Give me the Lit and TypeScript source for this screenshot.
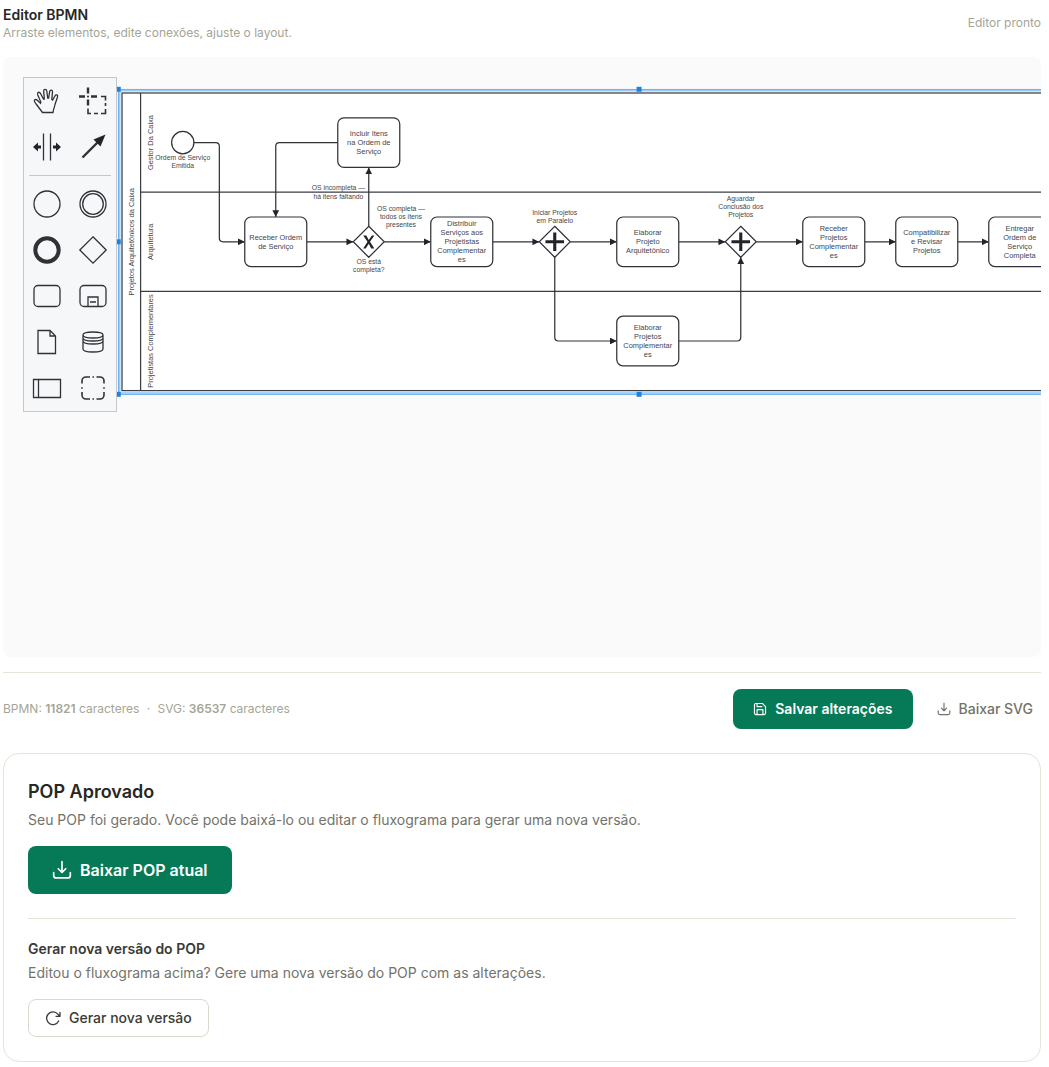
import { LitElement, html, svg, css } from "lit";
import { customElement, state } from "lit/decorators.js";

type Point = [number, number];
interface Task { cx: number; cy: number; lines: string[]; }
interface Label { cx: number; cy: number; lines: string[]; }

const TASKS: Task[] = [
  { cx: 398, cy: 80, lines: ["Incluir Itens", "na Ordem de", "Serviço"] },
  { cx: 248, cy: 240, lines: ["Receber Ordem", "de Serviço"] },
  { cx: 548, cy: 240, lines: ["Distribuir", "Serviços aos", "Projetistas", "Complementar", "es"] },
  { cx: 848, cy: 240, lines: ["Elaborar", "Projeto", "Arquitetônico"] },
  { cx: 848, cy: 400, lines: ["Elaborar", "Projetos", "Complementar", "es"] },
  { cx: 1148, cy: 240, lines: ["Receber", "Projetos", "Complementar", "es"] },
  { cx: 1298, cy: 240, lines: ["Compatibilizar", "e Revisar", "Projetos"] },
  { cx: 1448, cy: 240, lines: ["Entregar", "Ordem de", "Serviço", "Completa"] },
];

/* cy is the middle of the first line */
const LABELS: Label[] = [
  { cx: 98, cy: 104, lines: ["Ordem de Serviço", "Emitida"] },
  { cx: 349, cy: 153, lines: ["OS incompleta —", "há itens faltando"] },
  { cx: 450, cy: 186, lines: ["OS completa —", "todos os itens", "presentes"] },
  { cx: 398, cy: 271, lines: ["OS está", "completa?"] },
  { cx: 698, cy: 192, lines: ["Iniciar Projetos", "em Paralelo"] },
  { cx: 998, cy: 170, lines: ["Aguardar", "Conclusão dos", "Projetos"] },
];

const FLOWS: Point[][] = [
  [[116, 80], [157, 80], [157, 240], [198, 240]],
  [[298, 240], [373, 240]],
  [[398, 215], [398, 120]],
  [[348, 80], [248, 80], [248, 200]],
  [[423, 240], [498, 240]],
  [[598, 240], [673, 240]],
  [[723, 240], [798, 240]],
  [[698, 265], [698, 400], [798, 400]],
  [[898, 240], [973, 240]],
  [[898, 400], [998, 400], [998, 265]],
  [[1023, 240], [1098, 240]],
  [[1198, 240], [1248, 240]],
  [[1348, 240], [1398, 240]],
];

const LANES = ["Gestor Da Caixa", "Arquitetura", "Projetistas Complementares"];
const POOL = { width: 1668, height: 480, lane: 160 };

/* Polyline with softened corners */
function flowPath(points: Point[], radius = 6): string {
  const toward = ([ax, ay]: Point, [bx, by]: Point): Point => [
    ax + Math.sign(bx - ax) * radius,
    ay + Math.sign(by - ay) * radius,
  ];
  let d = `M${points[0]}`;
  for (let i = 1; i < points.length - 1; i++) {
    d += `L${toward(points[i], points[i - 1])}Q${points[i]} ${toward(points[i], points[i + 1])}`;
  }
  return `${d}L${points[points.length - 1]}`;
}

const textLines = (cx: number, first: number, step: number, lines: string[], cls: string) =>
  svg`<text class=${cls} text-anchor="middle">${lines.map(
    (line, i) => svg`<tspan x=${cx} y=${first + i * step + 4}>${line}</tspan>`
  )}</text>`;

@customElement("bpmn-diagram")
class BpmnDiagram extends LitElement {
  static styles = css`
    :host { display: block; overflow: hidden; }
    .canvas { display: block; width: 100%; height: 100%; }
    .pool, .lane { stroke: #3c3e44; stroke-width: 2; }
    .pool { fill: #fff; }
    .lane { fill: none; }
    .shape { fill: #fff; stroke: #303238; stroke-width: 2; }
    .flow { fill: none; stroke: #303238; stroke-width: 2; }
    .head { fill: #22242a; }
    .plus { fill: none; stroke: #22242a; stroke-width: 5; }
    .text { font: 12px "Liberation Sans", Arial, sans-serif; fill: #44464b; }
    .small { font: 11px "Liberation Sans", Arial, sans-serif; fill: #44464b; }
    .halo { fill: none; stroke: #9bcdfa; stroke-width: 3; }
    .outline { fill: none; stroke: #2c8fe8; stroke-width: 1; }
    .handle { fill: #1a83e0; }
  `;

  private gateway(cx: number, kind: "x" | "plus") {
    return svg`
      <path class="shape" d="M${cx} 215l25 25l-25 25l-25-25z"/>
      ${kind === "plus"
        ? svg`<path class="plus" d="M${cx - 15} 240h30M${cx} 225v30"/>`
        : svg`<path class="head" d="M${cx - 9} 230h5l4 7l5-7h4l-7 10l7 11h-5l-4-8l-5 8h-4l7-11z"/>`}`;
  }

  render() {
    const w = POOL.width, h = POOL.height;
    const handles: Point[] = [[-6, -6], [w / 2, -6], [-6, h / 2], [-6, h + 6], [w / 2, h + 6]];
    return html`
      <svg class="canvas" role="img" aria-label="Fluxograma do processo">
        <defs>
          <marker id="arrow" viewBox="0 0 10 10" refX="10" refY="5" markerWidth="11"
            markerHeight="11" markerUnits="userSpaceOnUse" orient="auto">
            <path class="head" d="M0 0L10 5L0 10z"/>
          </marker>
        </defs>
        <g transform="translate(119 36) scale(0.62)">
          <rect class="pool" width=${w} height=${h}/>
          <path class="lane" d="M30 0V${h}M30 160H${w}M30 320H${w}"/>
          <text class="text" text-anchor="middle" transform="translate(20 240) rotate(-90)">Projetos Arquitetônicos da Caixa</text>
          ${LANES.map((name, i) => svg`
            <text class="text" text-anchor="middle"
              transform="translate(50 ${i * POOL.lane + 80}) rotate(-90)">${name}</text>`)}
          ${FLOWS.map((p) => svg`<path class="flow" marker-end="url(#arrow)" d=${flowPath(p)}/>`)}
          <circle class="shape" cx="98" cy="80" r="18"/>
          ${this.gateway(398, "x")}${this.gateway(698, "plus")}${this.gateway(998, "plus")}
          ${TASKS.map((t) => svg`
            <rect class="shape" x=${t.cx - 50} y=${t.cy - 40} width="100" height="80" rx="10"/>
            ${textLines(t.cx, t.cy - (t.lines.length - 1) * 7.2, 14.4, t.lines, "text")}`)}
          ${LABELS.map((l) => textLines(l.cx, l.cy, 13.2, l.lines, "small"))}
          <rect class="halo" x="-4" y="-4" width=${w + 8} height=${h + 8}/>
          <rect class="outline" x="-6" y="-6" width=${w + 12} height=${h + 12}/>
          ${handles.map(([x, y]) => svg`<rect class="handle" x=${x - 4} y=${y - 4} width="8" height="8"/>`)}
        </g>
      </svg>`;
  }
}

const TOOLS_TOP = [
  { label: "Ativar ferramenta mão", icon: svg`<path d="M18.500 34.500L12.500 26.500L10.600 23.800C9.600 21.600 11.600 20.800 13.300 22.300L16.500 25.200L16.800 24L13.700 16.700C13 14.300 15.300 13.300 16.500 15.500L19.600 21.200L20.300 21L19.700 13C19.700 10.700 22.500 10.700 22.800 13L23.700 20.200L24.600 20.200L25.700 13.500C26.200 11.400 28.700 11.700 28.500 14L27.800 21.500L28.600 22L30.900 18C32 16 34.200 16.900 33.500 19L31 26.500C30.500 29.500 29.300 31 29 34.500z"/>` },
  { label: "Ativar ferramenta laço", icon: svg`<path class="bold" d="M9 18.500h6M21 18.500h6M18 9.500v6M18 21.500v6"/><path class="mid" d="M31 18.500h4.500v4M35.500 25v3M35.500 31v4.500h-4.500M28 35.500h-4M21 35.500h-3v-5"/><circle class="solid" cx="18" cy="18.500" r="1"/>` },
  { label: "Ativar ferramenta de espaço", icon: svg`<path d="M19.500 9.500v27M26.500 9.500v27"/><path class="solid" d="M9 23l5-4.500v3h3v3h-3v3zM37 23l-5-4.500v3h-3v3h3v3z"/>` },
  { label: "Ativar conexão global", icon: svg`<path class="bold" d="M12.500 33.500L28 18"/><path class="solid" d="M35.500 10.500L23.500 15.500L30.500 22.500z"/>` },
];
const TOOLS_BOTTOM = [
  { label: "Criar evento de início", icon: svg`<circle cx="23" cy="23" r="13"/>` },
  { label: "Criar evento intermediário", icon: svg`<circle cx="23" cy="23" r="13"/><circle cx="23" cy="23" r="10.300"/>` },
  { label: "Criar evento de fim", icon: svg`<circle class="heavy" cx="23" cy="23" r="11.700"/>` },
  { label: "Criar gateway", icon: svg`<path d="M23 9.800L36.200 23L23 36.200L9.800 23z"/>` },
  { label: "Criar tarefa", icon: svg`<rect x="10" y="12.500" width="26" height="21" rx="4"/>` },
  { label: "Criar subprocesso", icon: svg`<rect x="10" y="12.500" width="26" height="21" rx="4"/><path d="M18 33.500v-9.500h10v9.500M20 29h6"/>` },
  { label: "Criar objeto de dados", icon: svg`<path d="M14 11.500h12l5.500 5.500v17.500H14zM26 11.500V17h5.500"/>` },
  { label: "Criar repositório de dados", icon: svg`<path d="M13 16v14c0 4 20 4 20 0V16M13 16c0-4 20-4 20 0M13 16c0 4 20 4 20 0M13 19c0 4 20 4 20 0M13 22c0 4 20 4 20 0"/>` },
  { label: "Criar piscina", icon: svg`<path d="M9.500 14.500h27v18h-27zM14.500 14.500v18"/>` },
  { label: "Criar grupo", icon: svg`<path class="mid" d="M12 18.500V16a4 4 0 0 1 4-4h4M22.500 12h1.500M26.500 12H30a4 4 0 0 1 4 4v2.500M34 22.300v1.500M34 27v3a4 4 0 0 1-4 4h-3.500M24 34h-1.500M20 34h-4a4 4 0 0 1-4-4v-3M12 23.800v-1.500"/>` },
];

@customElement("bpmn-palette")
class BpmnPalette extends LitElement {
  static styles = css`
    :host { display: block; }
    .palette { background: #f5f7f9; border: 1px solid #c3c7ce; }
    .group { display: grid; grid-template-columns: 46px 46px; }
    .line { border: 0; border-top: 1px solid #c3c7ce; margin: 5px; }
    .tool { width: 46px; height: 46px; padding: 0; border: 0; background: none; cursor: pointer; }
    .icon { display: block; fill: none; stroke: #303238; stroke-width: 1.3; }
    .mid { stroke-width: 1.6; }
    .bold { stroke-width: 2.4; }
    .heavy { stroke-width: 4; }
    .solid { fill: #22242a; stroke: none; }
  `;
  private group(tools: { label: string; icon: unknown }[]) {
    return html`<div class="group">${tools.map((t) => html`
      <button class="tool" type="button" aria-label=${t.label}>
        <svg class="icon" width="46" height="46" viewBox="0 0 46 46" aria-hidden="true">${t.icon}</svg>
      </button>`)}</div>`;
  }
  render() {
    return html`<div class="palette">
      ${this.group(TOOLS_TOP)}<hr class="line" />${this.group(TOOLS_BOTTOM)}
    </div>`;
  }
}

const ICON_DOWNLOAD = svg`<path d="M12 2v13M7.500 10.500L12 15l4.500-4.500M2 15v3.500a3 3 0 0 0 3 3h14a3 3 0 0 0 3-3V15"/>`;
const ICON_SAVE = svg`<path d="M5 2.500h11L21.500 8v11a2.500 2.500 0 0 1-2.500 2.500H5A2.500 2.500 0 0 1 2.500 19V5A2.500 2.500 0 0 1 5 2.500zM7 21.500V13h10v8.500M7 2.500V8h8"/>`;
const ICON_REFRESH = svg`<path d="M22.500 3.500v6h-6M22.500 9.500L19.300 6.300A9.500 9.500 0 1 0 20.500 16.500"/>`;

@customElement("app-root")
class AppRoot extends LitElement {
  @state() private bpmnSize = 11821;
  @state() private svgSize = 36537;

  static styles = css`
    :host { display: block; background: #fff; font-family: Inter, sans-serif; font-size: 14px; line-height: 20px; color: #272724; }
    * { box-sizing: border-box; }
    .page { padding: 5px 8px 5px 3px; }
    .header { display: flex; align-items: center; justify-content: space-between; }
    .title, .heading, .subheading, .hint, .copy { margin: 0; }
    .title { font-size: 14px; font-weight: 600; line-height: 20px; }
    .hint, .status, .counts { font-size: 12px; line-height: 16px; color: #a5a595; }
    .editor { position: relative; height: 600px; margin-top: 16px; border-radius: 8px; background: #fafafa; overflow: hidden; }
    .diagram { height: 100%; }
    .palette { position: absolute; left: 20px; top: 20px; }
    .footer { display: flex; align-items: center; justify-content: space-between; margin-top: 15px; padding-top: 16px; border-top: 1px solid #e4e4d8; }
    .actions { display: flex; gap: 16px; }
    .strong { font-weight: 600; }
    .dot { margin: 0 4px; }
    .button { display: inline-flex; align-items: center; gap: 8px; font: 500 14px/20px Inter, sans-serif; border: 0; border-radius: 8px; cursor: pointer; white-space: nowrap; }
    .primary { background: #067a57; color: #fff; font-weight: 600; height: 40px; padding: 0 20px; }
    .large { font-size: 16px; height: 48px; padding: 0 24px; }
    .ghost { background: none; color: #73736a; padding: 0 8px; }
    .outlined { background: #fff; color: #3a3a36; border: 1px solid #d9d9cb; height: 38px; padding: 0 16px; }
    .icon { flex: none; fill: none; stroke: currentColor; stroke-width: 2; stroke-linecap: round; stroke-linejoin: round; }
    .card { margin-top: 24px; padding: 24px; border: 1px solid #e4e4d8; border-radius: 16px; background: #fff; }
    .heading { font-size: 18px; font-weight: 600; line-height: 28px; }
    .subheading { font-size: 14px; font-weight: 600; line-height: 20px; color: #3a3a36; }
    .copy { margin: 4px 0 16px; color: #73736a; }
    .rule { border: 0; border-top: 1px solid #e4e4d8; margin: 24px 0 20px; }
  `;

  private icon(content: unknown, size: number) {
    return html`<svg class="icon" width=${size} height=${size} viewBox="0 0 24 24" aria-hidden="true">${content}</svg>`;
  }

  render() {
    return html`
      <main class="page">
        <header class="header">
          <div>
            <h2 class="title">Editor BPMN</h2>
            <p class="hint">Arraste elementos, edite conexões, ajuste o layout.</p>
          </div>
          <span class="status" role="status">Editor pronto</span>
        </header>
        <section class="editor">
          <bpmn-diagram class="diagram"></bpmn-diagram>
          <bpmn-palette class="palette"></bpmn-palette>
        </section>
        <div class="footer">
          <div class="counts">
            BPMN: <span class="strong">${this.bpmnSize}</span> caracteres
            <span class="dot">·</span>
            SVG: <span class="strong">${this.svgSize}</span> caracteres
          </div>
          <div class="actions">
            <button class="button primary" type="button">${this.icon(ICON_SAVE, 14)}Salvar alterações</button>
            <button class="button ghost" type="button">${this.icon(ICON_DOWNLOAD, 14)}Baixar SVG</button>
          </div>
        </div>
        <section class="card">
          <h2 class="heading">POP Aprovado</h2>
          <p class="copy">Seu POP foi gerado. Você pode baixá-lo ou editar o fluxograma para gerar uma nova versão.</p>
          <button class="button primary large" type="button">${this.icon(ICON_DOWNLOAD, 20)}Baixar POP atual</button>
          <hr class="rule" />
          <h3 class="subheading">Gerar nova versão do POP</h3>
          <p class="copy">Editou o fluxograma acima? Gere uma nova versão do POP com as alterações.</p>
          <button class="button outlined" type="button">${this.icon(ICON_REFRESH, 16)}Gerar nova versão</button>
        </section>
      </main>`;
  }
}
